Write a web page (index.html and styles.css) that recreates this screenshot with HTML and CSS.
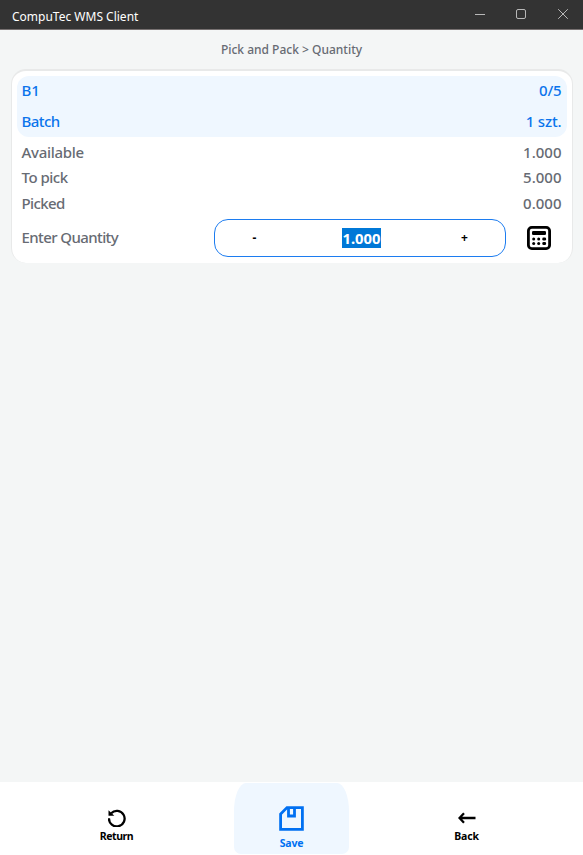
FILE: index.html
```html
<!DOCTYPE html>
<html lang="en">
<head>
<meta charset="utf-8">
<title>CompuTec WMS Client</title>
<link rel="stylesheet" href="styles.css">
</head>
<body>
<header class="titlebar">
  <span class="app-title">CompuTec WMS Client</span>
  <div class="window-controls">
    <svg viewBox="0 0 12 12"><path d="M1 6.5h10"/></svg>
    <svg viewBox="0 0 12 12"><rect x="1.5" y="1.5" width="9" height="9" rx="1.5"/></svg>
    <svg viewBox="0 0 12 12"><path d="M1.2 1.2l9.6 9.6M10.8 1.2l-9.6 9.6"/></svg>
  </div>
</header>
<main class="content">
  <h1 class="breadcrumb"><span>Pick and Pack &gt; Quantity</span></h1>
  <section class="card">
    <div class="highlight">
      <div class="row"><span>B1</span><span class="ratio">0/5</span></div>
      <div class="row"><span class="batch">Batch</span><span class="unit">1 szt.</span></div>
    </div>
    <div class="details">
      <div class="row"><span class="available">Available</span><span>1.000</span></div>
      <div class="row"><span class="topick">To pick</span><span>5.000</span></div>
      <div class="row"><span class="picked">Picked</span><span>0.000</span></div>
    </div>
    <div class="entry">
      <span class="entry-label">Enter Quantity</span>
      <div class="stepper">
        <button class="step">-</button>
        <span class="value"><mark>1.000</mark></span>
        <button class="step">+</button>
      </div>
      <svg class="calculator" viewBox="0 0 24 24">
        <rect x="1.4" y="1.4" width="21.2" height="21.2" rx="3.4" fill="none" stroke="#000" stroke-width="2.8"/>
        <rect x="5" y="5" width="14" height="4" rx="1.3"/>
        <circle cx="6.7" cy="13" r="1.5"/><circle cx="11.7" cy="13" r="1.5"/><rect x="15.3" y="11.5" width="3.8" height="3" rx="1.3"/>
        <circle cx="6.7" cy="17.5" r="1.5"/><circle cx="11.7" cy="17.5" r="1.5"/><rect x="15.3" y="16" width="3.8" height="3" rx="1.3"/>
      </svg>
    </div>
  </section>
</main>
<footer class="toolbar">
  <button class="tool return">
    <svg viewBox="0 0 18 18"><path d="M1 9.3A7.8 7.8 0 1 0 3.2 4.2" fill="none" stroke="#000" stroke-width="2.3"/><path d="M.5 1.2v5.6h5.8z"/></svg>
    <span>Return</span>
  </button>
  <button class="tool save">
    <svg viewBox="0 0 25 25" fill="none" stroke="#0070f2" stroke-width="2.8"><path d="M8 1.6h15.4v21.8H1.6V8z"/><path d="M9.5 2v8h6V2"/></svg>
    <span>Save</span>
  </button>
  <button class="tool back">
    <svg viewBox="0 0 18 12" fill="none" stroke="#000" stroke-width="2.3"><path d="M17.5 6H2M6 1.2L1.5 6 6 10.8"/></svg>
    <span>Back</span>
  </button>
</footer>
</body>
</html>
```
FILE: styles.css
```css
* { box-sizing: border-box; }
body {
  margin: 0;
  height: 855px;
  display: flex;
  flex-direction: column;
  overflow: hidden;
  background: #f4f6f6;
  color: #676b73;
  font-family: "Noto Sans", sans-serif;
}
button { border: 0; background: none; padding: 0; font: inherit; color: #000; }
svg { display: block; flex: none; }
span { white-space: nowrap; }

.titlebar {
  height: 30px;
  display: flex;
  justify-content: space-between;
  padding: 0 14.5px 0 12px;
  background: #333;
  border-bottom: 1px solid #777171;
  color: #fff;
}
.app-title { font-size: 12px; line-height: 33px; }
.window-controls { display: flex; gap: 29.5px; padding-top: 8px; }
.window-controls svg { width: 12px; height: 12px; fill: none; stroke: #b8b8b8; stroke-width: 1; }

.content { flex: 1; }
.breadcrumb {
  height: 39px;
  margin: 0;
  line-height: 40px;
  text-align: center;
  font-size: 12px;
  font-weight: 500;
}
.card {
  width: 562px;
  height: 194px;
  margin-left: 10.5px;
  padding: 5px 5px 0;
  background: #fff;
  border: 1.5px solid #e8e9e9;
  border-top-width: 2px;
  border-bottom: 0;
  border-radius: 15px;
  font-size: 15px;
  font-weight: 500;
}
.highlight { height: 61px; background: #eff7ff; border-radius: 12px; color: #0b74ec; }
.row { display: flex; justify-content: space-between; align-items: center; padding: 0 5px; }
.highlight .row { height: 30.5px; padding-bottom: 2px; }
.details { padding: 2px 0 3px; }
.details .row { height: 25.5px; }
.ratio, .unit { letter-spacing: -.15px; }
.batch { letter-spacing: -.55px; }
.available { letter-spacing: -.3px; }
.topick { letter-spacing: -.5px; }
.picked { letter-spacing: -.6px; }
.entry { display: flex; align-items: center; height: 38px; padding: 0 15px 0 5px; }
.entry-label { width: 192px; letter-spacing: -.6px; padding-bottom: 1px; }
.stepper {
  width: 292px;
  height: 38px;
  display: flex;
  justify-content: space-between;
  align-items: center;
  padding: 0 30px;
  border: 1px solid #1c7cf0;
  border-radius: 14px;
  color: #000;
  font-weight: 700;
}
.step { width: 20px; font-size: 12px; }
.value { margin-left: 4px; }
mark { display: block; height: 20px; line-height: 21px; background: #0078d7; color: #fff; font-size: 14.8px; }
.calculator { width: 24px; height: 24px; margin-left: 21px; }

.toolbar {
  height: 73px;
  display: flex;
  justify-content: space-between;
  padding: 1px 59px 1px;
  background: #fff;
}
.tool { width: 115px; display: flex; flex-direction: column; align-items: center; font-size: 10.5px; line-height: 14px; font-weight: 700; letter-spacing: -.15px; }
.return { letter-spacing: -.45px; }
.return svg { width: 18px; height: 18px; margin: 26px 0 2px; }
.back svg { width: 18px; height: 12px; margin: 29px 0 5px; }
.save { background: #eff7ff; border-radius: 12px 12px 7px 7px / 28px 28px 7px 7px; color: #0070f2; }
.save svg { width: 25px; height: 25px; margin: 23px 0 5px; }
```
